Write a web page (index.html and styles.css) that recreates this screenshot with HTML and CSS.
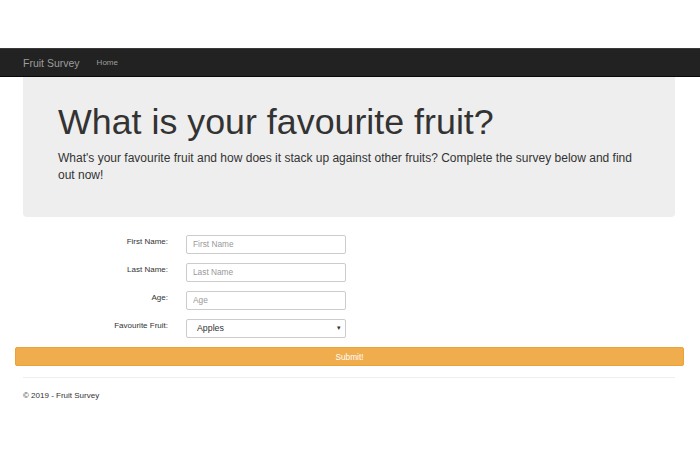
FILE: index.html
```html
<!DOCTYPE html>
<html>
<head>
<meta charset="utf-8">
<link rel="stylesheet" href="styles.css">
</head>
<body>
<div class="top-space"></div>
<nav class="navbar">
  <a class="brand">Fruit Survey</a>
  <a class="nav-link">Home</a>
</nav>
<div class="jumbotron">
  <h1 class="title">What is your favourite fruit?</h1>
  <p class="lead">What's your favourite fruit and how does it stack up against other fruits? Complete the survey below and find out now!</p>
</div>
<form class="survey">
  <div class="row">
    <label class="label">First Name:</label>
    <input class="field" type="text" placeholder="First Name">
  </div>
  <div class="row">
    <label class="label">Last Name:</label>
    <input class="field" type="text" placeholder="Last Name">
  </div>
  <div class="row">
    <label class="label">Age:</label>
    <input class="field" type="text" placeholder="Age">
  </div>
  <div class="row">
    <label class="label">Favourite Fruit:</label>
    <div class="select">
      <span>Apples</span>
      <span class="caret">&#9662;</span>
    </div>
  </div>
  <button class="submit" type="button">Submit!</button>
</form>
<hr class="divider">
<footer class="footer">&copy; 2019 - Fruit Survey</footer>
</body>
</html>
```

FILE: styles.css
```css
* { box-sizing: border-box; }
body {
  margin: 0;
  font-family: "Liberation Sans", Arial, sans-serif;
  color: #333;
  background: #fff;
}
.top-space { height: 48px; }
.navbar {
  height: 29px;
  background: #222;
  border-top: 1px solid #3a3a3a;
  border-bottom: 1px solid #080808;
  display: flex;
  align-items: center;
  padding-left: 23px;
}
.brand {
  font-size: 10.5px;
  color: #9d9d9d;
}
.nav-link {
  font-size: 8px;
  color: #9d9d9d;
  margin-left: 17px;
}
.jumbotron {
  margin: 0 25px 0 23px;
  background: #eee;
  height: 140px;
  border-radius: 0 0 4px 4px;
  padding: 24px 35px 0 35px;
}
.title {
  margin: 0;
  font-size: 35.8px;
  font-weight: 400;
  line-height: 42px;
}
.lead {
  margin: 7px 0 0 0;
  font-size: 12px;
  line-height: 17px;
}
.survey {
  padding-top: 13px;
}
.row {
  display: flex;
  align-items: center;
  height: 28px;
}
.label {
  width: 168px;
  text-align: right;
  font-size: 8px;
  padding-bottom: 5px;
}
.field, .select {
  margin-left: 18px;
  width: 160px;
  height: 19px;
  border: 1px solid #ccc;
  border-radius: 2px;
  font-family: "Liberation Sans", Arial, sans-serif;
  font-size: 8.3px;
  padding: 0 6px;
  color: #555;
  background: #fff;
}
.field::placeholder { color: #999; }
.select {
  display: flex;
  align-items: center;
  justify-content: space-between;
  font-size: 8.8px;
  color: #333;
  padding: 0 4px 0 10px;
}
.caret { font-size: 7px; color: #333; }
.submit {
  display: block;
  margin: 5px 16px 0 15px;
  width: calc(100% - 31px);
  height: 19px;
  background: #f0ad4e;
  border: 1px solid #eea236;
  border-radius: 2px;
  color: #fff;
  font-family: "Liberation Sans", Arial, sans-serif;
  font-size: 8.3px;
}
.divider {
  margin: 11px 25px 0 23px;
  border: 0;
  border-top: 1px solid #eee;
}
.footer {
  margin: 13px 0 0 23px;
  font-size: 8px;
  color: #333;
}
```
